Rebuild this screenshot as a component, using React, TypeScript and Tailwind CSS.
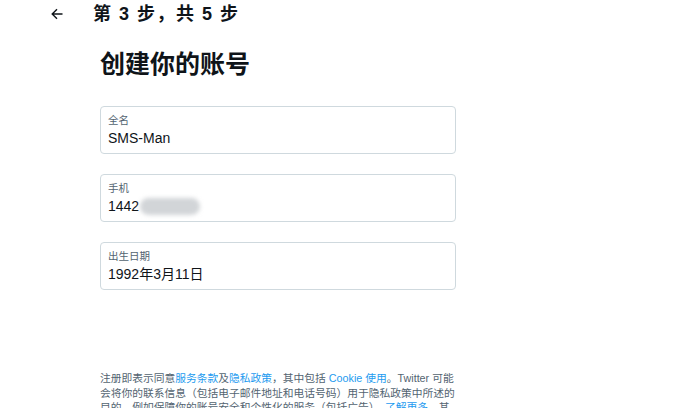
import React from 'react';

const font = 'font-["Liberation_Sans","Noto_Sans_CJK_SC",sans-serif]';

const Field = ({ label, children }: { label: string; children: React.ReactNode }) => (
  <div className="h-[48px] w-[356px] rounded-[4px] border border-[#cfd9de] px-[7px] pt-[5px]">
    <div className="text-[10.5px] leading-[16px] text-[#536471]">{label}</div>
    <div className="text-[14px] leading-[20px] text-[#0f1419]">{children}</div>
  </div>
);

const App = () => {
  return (
    <div className={`${font} relative h-[408px] w-[692px] overflow-hidden bg-white`}>
      <div className="flex h-[28px] items-center">
        <div className="ml-[51px] flex w-[42px] items-center">
          <svg width="12" height="12" viewBox="0 0 12 12" fill="none" stroke="#0f1419" strokeWidth="1.4">
            <path d="M11.5 6H1.2M6 1.2L1.2 6 6 10.8" />
          </svg>
        </div>
        <h2 className="text-[18px] font-bold tracking-[1.5px] text-[#0f1419]">第 3 步，共 5 步</h2>
      </div>

      <div className="ml-[100px] w-[356px]">
        <h1 className="mt-[20px] h-[58px] text-[25px] font-bold leading-[32px] text-[#0f1419]">创建你的账号</h1>

        <div className="flex flex-col gap-[20px]">
          <Field label="全名">SMS-Man</Field>
          <Field label="手机">
            <span className="relative inline-flex items-center">
              1442
              <span className="ml-[1px] inline-block h-[17px] w-[60px] rounded-full bg-[#d2d5d8] blur-[2px]" />
            </span>
          </Field>
          <Field label="出生日期">1992年3月11日</Field>
        </div>

        <p className="mt-[81px] text-[10.75px] leading-[14.5px] text-[#536471]">
          注册即表示同意<span className="text-[#1d9bf0]">服务条款</span>及<span className="text-[#1d9bf0]">隐私政策</span>，其中包括 <span className="text-[#1d9bf0]">Cookie 使用</span>。Twitter 可能会将你的联系信息（包括电子邮件地址和电话号码）用于隐私政策中所述的目的，例如保障你的账号安全和个性化的服务（包括广告）。<span className="text-[#1d9bf0]">了解更多</span>。其他人将能够通过电子邮件或手机号码找到你。
        </p>
      </div>
    </div>
  );
};

export default App;
